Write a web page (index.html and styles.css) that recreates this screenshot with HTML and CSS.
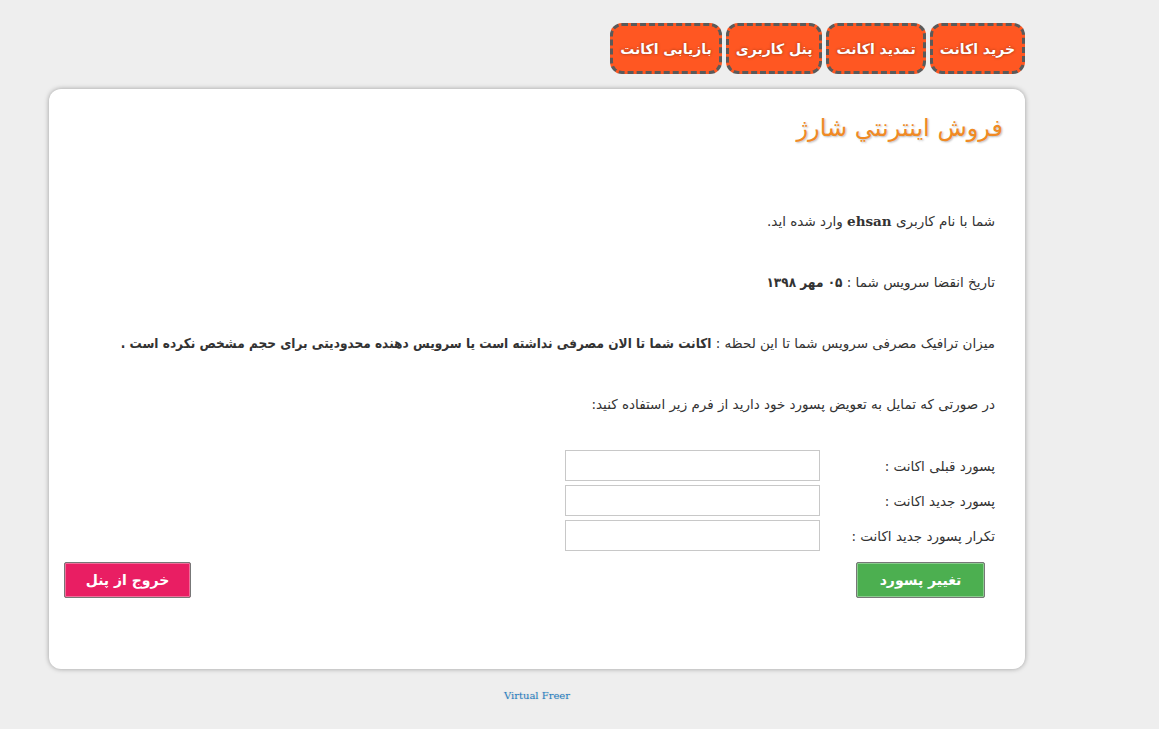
FILE: index.html
```html
<!DOCTYPE html>
<html lang="fa" dir="rtl">
<head>
<meta charset="utf-8">
<title>فروش اینترنتی شارژ</title>
<link rel="stylesheet" href="styles.css">
</head>
<body>
<div class="wrap">
  <nav class="tabs">
    <a class="tab" href="#">خرید اکانت</a>
    <a class="tab" href="#">تمدید اکانت</a>
    <a class="tab" href="#">پنل کاربری</a>
    <a class="tab" href="#">بازیابی اکانت</a>
  </nav>
  <main class="card">
    <h1 class="title">فروش اینترنتي شارژ</h1>
    <div class="content">
      <p>شما با نام کاربری <b class="latin">ehsan</b> وارد شده اید.</p>
      <p>تاریخ انقضا سرویس شما : <b>۰۵ مهر ۱۳۹۸</b></p>
      <p>میزان ترافیک مصرفی سرویس شما تا این لحظه : <b>اکانت شما تا الان مصرفی نداشته است یا سرویس دهنده محدودیتی برای حجم مشخص نکرده است .</b></p>
      <p>در صورتی که تمایل به تعویض پسورد خود دارید از فرم زیر استفاده کنید:</p>
      <form class="form">
        <div class="row"><label class="lbl">پسورد قبلی اکانت :</label><input class="inp" type="password"></div>
        <div class="row"><label class="lbl">پسورد جدید اکانت :</label><input class="inp" type="password"></div>
        <div class="row"><label class="lbl">تکرار پسورد جدید اکانت :</label><input class="inp" type="password"></div>
        <div class="actions">
          <button class="btn btn-green" type="button">تغییر پسورد</button>
          <button class="btn btn-pink" type="button">خروج از پنل</button>
        </div>
      </form>
    </div>
  </main>
  <footer class="foot"><a href="#">Virtual Freer</a></footer>
</div>
</body>
</html>
```
FILE: styles.css
```css
* { box-sizing: border-box; }
html, body { margin: 0; padding: 0; }
body {
  background: #eeeeee;
  font-family: "DejaVu Sans", sans-serif;
  color: #333;
}
.wrap {
  width: 976px;
  margin-left: 49px;
  margin-right: auto;
  padding-top: 23px;
}
.tabs {
  display: flex;
  gap: 4px;
  height: 52px;
  margin-bottom: 14px;
}
.tab {
  display: flex;
  align-items: center;
  justify-content: center;
  padding: 0 7px;
  height: 51px;
  background: #ff5722;
  border: 3px dashed #5a5a5a;
  border-radius: 12px;
  color: #fff;
  font-weight: bold;
  font-size: 14px;
  text-decoration: none;
  text-shadow: 0 0 3px rgba(0,0,0,.45);
}
.card {
  background: #fff;
  border-radius: 12px;
  box-shadow: 0 0 5px rgba(0,0,0,.35);
  padding: 16px 22px 71px 15px;
}
.title {
  margin: 0;
  font-size: 24px;
  font-weight: normal;
  color: #f08a24;
  text-shadow: 1px 1px 2px rgba(0,0,0,.25);
  line-height: 46px;
}
.content {
  padding-right: 8px;
  font-size: 13.5px;
}
.content p {
  margin: 0;
  line-height: 61px;
}
.content p:first-child { margin-top: 40px; }
.content b { font-family: "DejaVu Sans Condensed", "DejaVu Sans", sans-serif; }
.content b.latin { font-family: "DejaVu Serif", serif; }
.form { margin-top: 13px; }
.row {
  display: flex;
  align-items: center;
  height: 35px;
}
.lbl { width: 175px; }
.inp {
  width: 255px;
  height: 31px;
  border: 1px solid #c8c8c8;
  background: #fff;
}
.actions {
  display: flex;
  justify-content: space-between;
  margin-top: 9px;
  padding-right: 10px;
}
.btn {
  height: 36px;
  border: 1px solid #777;
  border-radius: 2px;
  color: #fff;
  font-family: "DejaVu Sans", sans-serif;
  font-size: 14px;
  font-weight: bold;
  box-shadow: inset 0 0 0 1px rgba(255,255,255,.35);
}
.btn-green { width: 129px; background: #4caf50; }
.btn-pink { width: 127px; background: #e91e63; }
.foot {
  text-align: center;
  padding-top: 21px;
  font-family: "DejaVu Serif", serif;
  font-size: 10px;
}
.foot a {
  color: #1f7ec2;
  text-decoration: none;
  text-shadow: 0 0 2px rgba(0,0,0,.15);
}
```
